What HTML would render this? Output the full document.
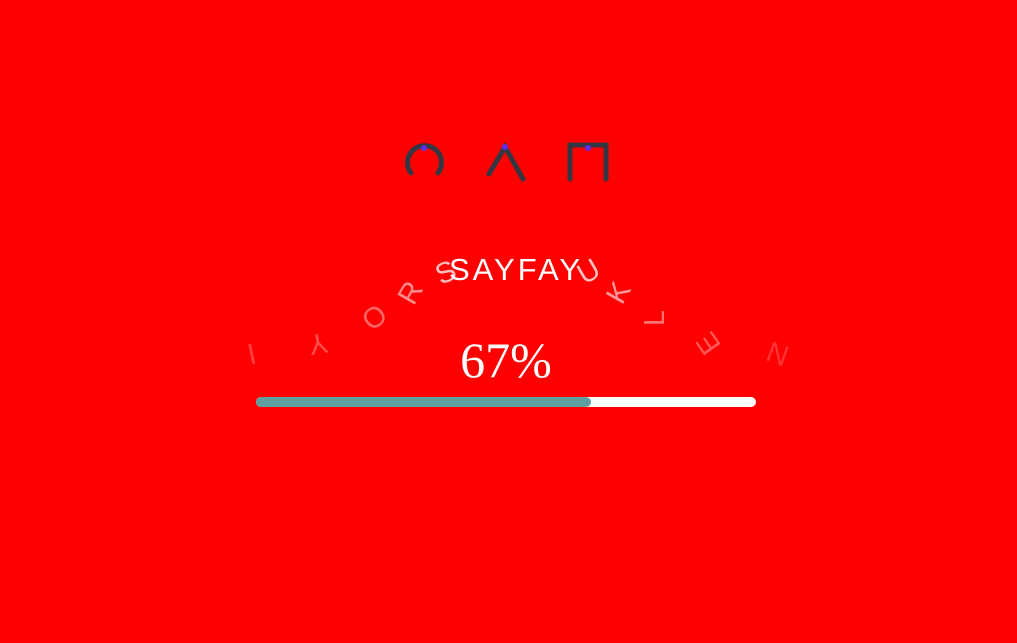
<!DOCTYPE html>
<html><head><meta charset="utf-8"><style>
html,body{margin:0;padding:0;width:1017px;height:643px;background:#ff0000;overflow:hidden;position:relative;font-family:"Liberation Sans",sans-serif}
.l{position:absolute;color:#fff;font-size:29px;transform-origin:center;width:30px;text-align:center;line-height:30px}
</style></head><body>
<svg width="1017" height="643" style="position:absolute;left:0;top:0">
<g stroke="#343642" stroke-width="5" fill="none" stroke-linecap="round">
<path d="M411 173 A17 17 0 1 1 438 173"/>
<path d="M489 174 L505 147 L523 179"/>
<path d="M570 179 L570 145 L606 145 L606 179"/>
</g>
<circle cx="424" cy="148" r="3" fill="#5b2ef0"/>
<circle cx="505" cy="147" r="3" fill="#5b2ef0"/>
<circle cx="588" cy="148" r="3" fill="#5b2ef0"/>
<rect x="256" y="397" width="500" height="10" rx="5" fill="#fff"/>
<rect x="256" y="397" width="335" height="10" rx="5" fill="#5f9ea0"/>
</svg>
<div style="position:absolute;left:416px;top:252px;width:200px;text-align:center;color:#fff;font-size:31px;letter-spacing:3px">SAYFAY</div>
<div class="l" style="left:237px;top:340px;opacity:.25;transform:rotate(-12deg)">I</div>
<div class="l" style="left:303px;top:328px;opacity:.3;transform:rotate(170deg)">Y</div>
<div class="l" style="left:360px;top:303px;opacity:.4;transform:rotate(-40deg)">O</div>
<div class="l" style="left:396px;top:278px;opacity:.55;transform:rotate(-60deg)">R</div>
<div class="l" style="left:431px;top:258px;opacity:.75;transform:rotate(-25deg)">S</div>
<div class="l" style="left:574px;top:257px;opacity:.75;transform:rotate(-30deg)">U</div>
<div class="l" style="left:604px;top:278px;opacity:.6;transform:rotate(-60deg)">K</div>
<div class="l" style="left:640px;top:303px;opacity:.45;transform:rotate(-90deg)">L</div>
<div class="l" style="left:694px;top:328px;opacity:.35;transform:rotate(-125deg)">E</div>
<div class="l" style="left:763px;top:338px;opacity:.2;transform:rotate(-160deg)">N</div>
<div style="position:absolute;left:406px;top:332px;width:200px;text-align:center;color:#fff;font-family:'Liberation Serif',serif;font-size:50px;line-height:56px">67%</div>
</body></html>
